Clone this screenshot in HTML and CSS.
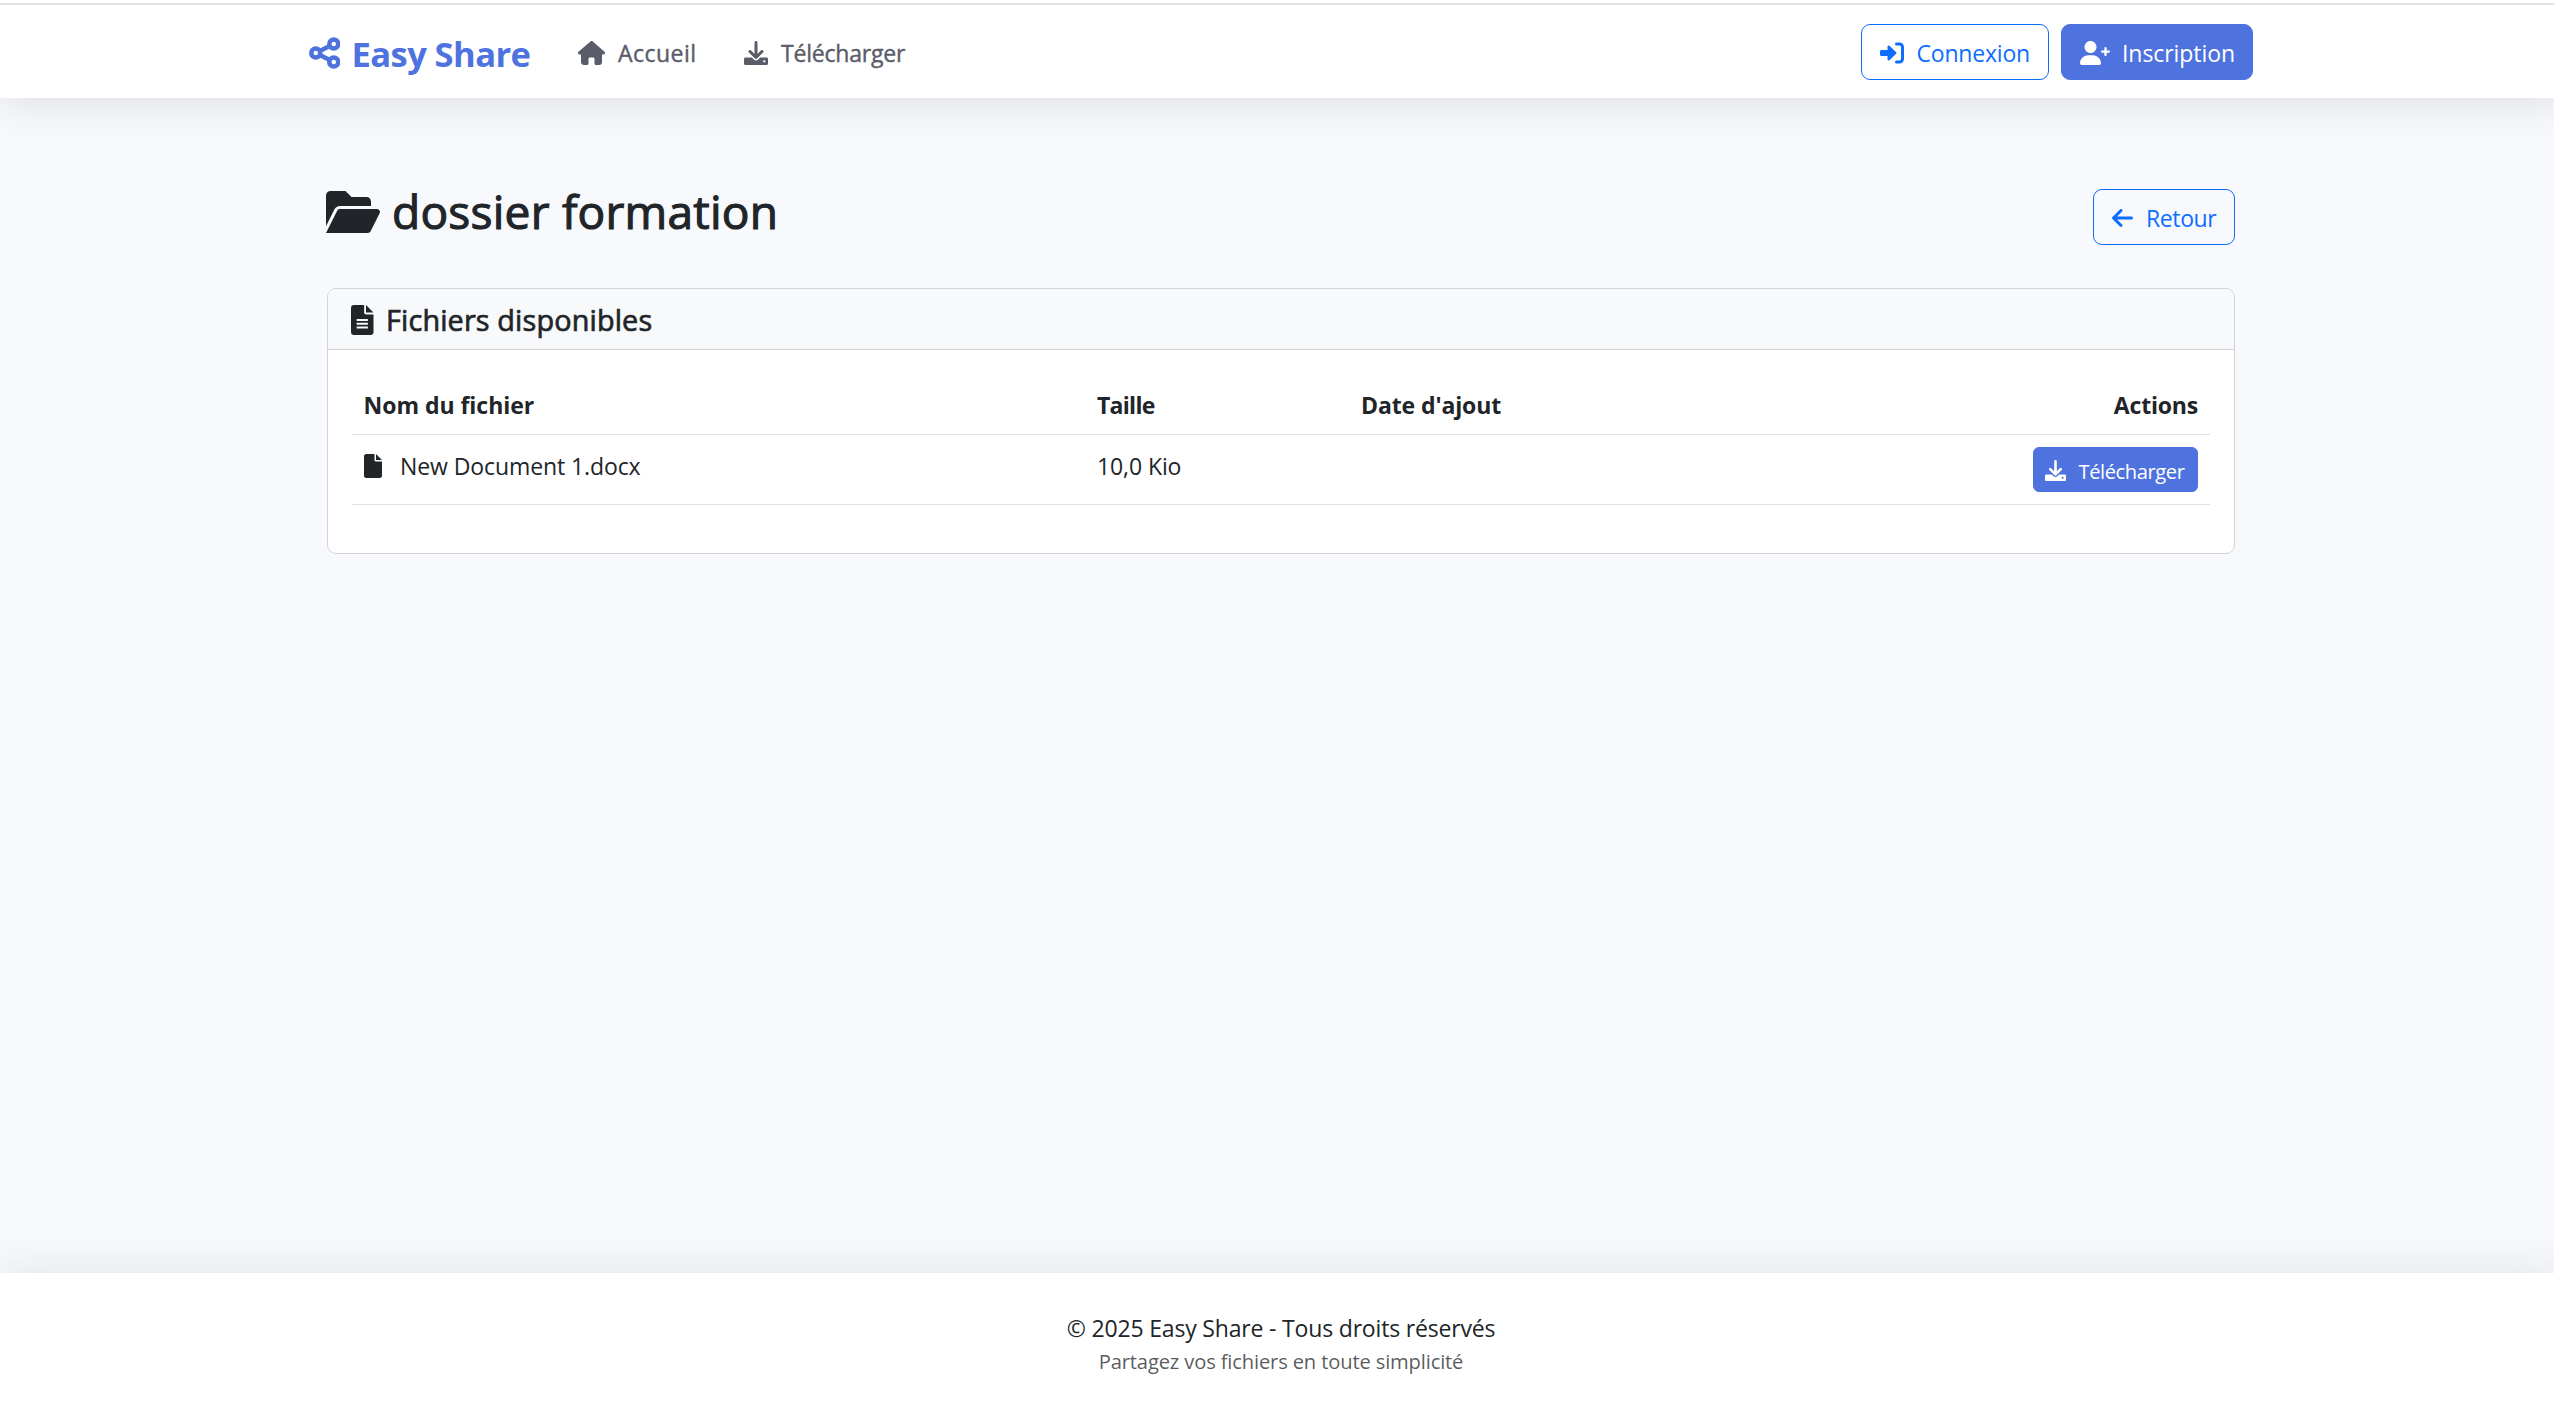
FILE: index.html
```html
<!DOCTYPE html>
<html lang="fr">
<head>
<meta charset="utf-8">
<title>Easy Share</title>
<link rel="stylesheet" href="styles.css">
</head>
<body>
<svg class="sprite" aria-hidden="true">
  <symbol id="i-download" viewBox="0 0 512 512"><path d="M480 352h-133.5l-45.25 45.25C289.2 409.3 273.1 416 256 416s-33.16-6.656-45.25-18.75L165.5 352H32c-17.67 0-32 14.33-32 32v96c0 17.67 14.33 32 32 32h448c17.67 0 32-14.33 32-32v-96C512 366.3 497.7 352 480 352zM432 456c-13.2 0-24-10.8-24-24c0-13.2 10.8-24 24-24s24 10.8 24 24C456 445.2 445.2 456 432 456zM233.4 374.6C239.6 380.9 247.8 384 256 384s16.38-3.125 22.62-9.375l128-128c12.49-12.5 12.49-32.75 0-45.25c-12.5-12.5-32.76-12.5-45.25 0L288 274.8V32c0-17.67-14.33-32-32-32C238.3 0 224 14.33 224 32v242.8L150.6 201.4c-12.49-12.5-32.75-12.5-45.25 0c-12.49 12.5-12.49 32.75 0 45.25L233.4 374.6z"/></symbol>
</svg>
<header class="navbar">
  <div class="container navbar-inner">
    <a class="brand">
      <svg class="icon icon-share" viewBox="0 0 448 512"><g fill="none" stroke="currentColor" stroke-width="64"><circle cx="96" cy="256" r="64"/><circle cx="352" cy="128" r="64"/><circle cx="352" cy="384" r="64"/><path d="M153 227.500 295 156.500M153 284.500 295 355.500"/></g></svg>
      <span class="label brand-name">Easy Share</span>
    </a>
    <nav class="links">
      <a class="link link-home">
        <svg class="icon icon-home" viewBox="0 0 576 512"><path d="M575.8 255.500c0 18-15 32.100-32 32.100h-32l.7 160.200c0 35.300-24 64.200-60 64.200h-68.500c-17.700 0-32-14.300-32-32V384c0-17.700-14.300-32-32-32h-64c-17.700 0-32 14.300-32 32v96c0 17.700-14.300 32-32 32H128c-38 0-64-28.700-64-64V287.600H32c-18 0-32-14-32-32.100 0-9 3-17 10-24L266.400 8c7-7 15-8 22-8s15 2 21 7l255.400 224.500c8 7 12 15 11 24z"/></svg>
        <span class="label home-label">Accueil</span>
      </a>
      <a class="link">
        <svg class="icon icon-md"><use href="#i-download"/></svg>
        <span class="label download-label">Télécharger</span>
      </a>
    </nav>
    <div class="account">
      <a class="btn btn-outline btn-login">
        <svg class="icon icon-md" viewBox="0 0 512 512"><path d="M344.7 238.5l-144.1-136C193.7 95.97 183.4 94.17 174.6 97.95C165.8 101.8 160.1 110.4 160.1 120V192H32.02C14.33 192 0 206.3 0 224v64c0 17.68 14.33 32 32.02 32h128.1v72c0 9.578 5.707 18.25 14.51 22.05c8.803 3.781 19.03 1.984 26-4.594l144.1-136C354.3 264.4 354.3 247.6 344.7 238.5zM416 32h-64c-17.67 0-32 14.33-32 32s14.33 32 32 32h64c17.67 0 32 14.33 32 32v256c0 17.67-14.33 32-32 32h-64c-17.67 0-32 14.33-32 32s14.33 32 32 32h64c53.02 0 96-42.98 96-96V128C512 74.98 469 32 416 32z"/></svg>
        <span class="label">Connexion</span>
      </a>
      <a class="btn btn-primary btn-register">
        <svg class="icon icon-user" viewBox="0 0 640 512"><path d="M224 256c70.7 0 128-57.31 128-128S294.7 0 224 0C153.3 0 96 57.31 96 128S153.3 256 224 256zM274.7 304H173.3C77.61 304 0 381.6 0 477.3C0 496.5 15.52 512 34.66 512h378.7C432.5 512 448 496.5 448 477.3C448 381.6 370.4 304 274.7 304zM616 200h-48v-48C568 138.8 557.3 128 544 128s-24 10.75-24 24v48h-48C458.8 200 448 210.8 448 224s10.75 24 24 24h48v48C520 309.3 530.8 320 544 320s24-10.75 24-24v-48h48C629.3 248 640 237.3 640 224S629.3 200 616 200z"/></svg>
        <span class="label">Inscription</span>
      </a>
    </div>
  </div>
</header>
<main class="container main">
  <div class="heading">
    <h1 class="title">
      <svg class="icon icon-folder" viewBox="0 0 576 512"><path d="M147.8 192H480V144C480 117.5 458.5 96 432 96h-160l-64-64h-160C21.49 32 0 53.49 0 80v328.4l90.54-181.1C101.4 205.6 123.4 192 147.8 192zM543.1 224H147.8C135.7 224 124.6 230.8 119.2 241.7L0 480h447.1c12.12 0 23.2-6.852 28.62-17.69l96-192C583.2 249 567.7 224 543.1 224z"/></svg>
      <span>dossier formation</span>
    </h1>
    <a class="btn btn-outline btn-back">
      <svg class="icon icon-arrow" viewBox="0 0 448 512"><path d="M447.1 256C447.1 273.7 432.8 288 415.1 288H109.3l105.4 105.4c12.5 12.5 12.5 32.75 0 45.25C208.4 444.9 200.2 448 192 448s-16.38-3.125-22.62-9.375l-160-160c-12.5-12.5-12.5-32.75 0-45.25l160-160c12.5-12.5 32.75-12.5 45.25 0s12.5 32.75 0 45.25L109.3 224H415.1C432.8 224 447.1 238.3 447.1 256z"/></svg>
      <span class="label">Retour</span>
    </a>
  </div>
  <section class="card">
    <h2 class="card-header">
      <svg class="icon icon-doc" viewBox="0 0 384 512"><path fill-rule="evenodd" d="M0 48C0 21.490 21.490 0 48 0H224V128c0 17.700 14.300 32 32 32H384V464c0 26.500-21.500 48-48 48H48c-26.510 0-48-21.500-48-48zM256 0V128H384zM96 240V272H288V240zM96 304V336H288V304zM96 368V400H288V368z"/></svg>
      <span class="label">Fichiers disponibles</span>
    </h2>
    <div class="card-body">
      <table class="files">
        <colgroup><col class="col-name"><col class="col-size"><col class="col-date"><col></colgroup>
        <thead>
          <tr><th>Nom du fichier</th><th class="th-size">Taille</th><th class="th-date">Date d'ajout</th><th class="th-actions">Actions</th></tr>
        </thead>
        <tbody>
          <tr>
            <td><div class="file"><svg class="icon icon-file" viewBox="0 0 384 512"><path d="M0 48C0 21.490 21.490 0 48 0H224V128c0 17.700 14.300 32 32 32H384V464c0 26.500-21.500 48-48 48H48c-26.510 0-48-21.500-48-48zM256 0V128H384z"/></svg><span>New Document 1.docx</span></div></td>
            <td>10,0 Kio</td>
            <td></td>
            <td class="td-actions">
              <a class="btn btn-primary btn-small">
                <svg class="icon icon-sm"><use href="#i-download"/></svg>
                <span class="label">Télécharger</span>
              </a>
            </td>
          </tr>
        </tbody>
      </table>
    </div>
  </section>
</main>
<footer class="footer">
  <p class="copyright">© 2025 Easy Share - Tous droits réservés</p>
  <p class="tagline">Partagez vos fichiers en toute simplicité</p>
</footer>
</body>
</html>
```
FILE: styles.css
```css
* { box-sizing: border-box; }
html { overflow: hidden; background: #f8f9fc; }
body {
  margin: 0;
  width: 2562px;
  height: 1410px;
  display: flex;
  flex-direction: column;
  background: #f8f9fd;
  color: #212529;
  font-family: "Open Sans", "Noto Sans", sans-serif;
  font-size: 23.04px;
  line-height: 36px;
  letter-spacing: -0.11px;
}
h1, h2, p { margin: 0; font-weight: 500; }
.sprite { display: none; }
.container { width: 1944px; margin: 0 auto; }

.icon { display: block; flex: none; height: 24px; fill: currentColor; margin-top: 2px; }
.icon-md { width: 24px; }
.icon-sm { width: 21px; height: 21px; margin-top: 1px; }
.icon-share { width: 31.5px; height: 36px; }
.icon-home { width: 27px; }
.icon-user { width: 30px; }
.icon-arrow { width: 21px; }
.icon-folder { width: 54px; height: 48px; margin: 0 0 0 -1px; }
.icon-doc { width: 22.5px; height: 30px; }
.icon-file { width: 18px; margin: 0; }
.label { margin-top: 2px; white-space: nowrap; }

.navbar {
  flex: none;
  height: 98px;
  padding-top: 3px;
  background: #fff;
  box-shadow: 0 3.6px 42px rgba(58, 59, 69, .15);
}
.navbar::before { content: ""; display: block; height: 2px; background: #e1e2e8; }
.navbar-inner { display: flex; align-items: center; padding-top: 19px; }
.brand {
  width: 269.5px;
  display: flex;
  align-items: center;
  gap: 11.5px;
  color: #4e73df;
  font-size: 34.56px;
  font-weight: 700;
  letter-spacing: -.58px;
}
.brand .icon { margin-left: -.5px; }
.brand-name { margin-top: 4px; }
.links { display: flex; color: #5a5c69; font-weight: 500; -webkit-text-stroke: .4px currentColor; }
.link { display: flex; align-items: center; gap: 13px; }
.link .icon { margin-left: -.5px; }
.link-home { width: 166px; gap: 13px; }
.home-label { letter-spacing: .45px; }
.download-label { letter-spacing: -.22px; }
.account { display: flex; gap: 12px; margin-left: auto; }

.btn {
  display: flex;
  align-items: center;
  gap: 12.5px;
  height: 56px;
  padding-left: 18px;
  border: 1px solid transparent;
  border-radius: 9px;
}
.btn-outline { color: #0d6efd; border-color: #0d6efd; }
.btn-primary { color: #fff; background: #4e73df; border-color: #4e73df; }
.btn-login { width: 188px; letter-spacing: -.21px; }
.btn-register { width: 192px; gap: 12px; letter-spacing: -.08px; }
.btn-back { width: 142px; gap: 13px; letter-spacing: -.41px; }
.btn-small {
  width: 165px;
  height: 45px;
  padding-left: 11px;
  margin-left: auto;
  border-radius: 6px;
  font-size: 20.16px;
  letter-spacing: -.43px;
}

.main { flex: 1; padding: 91px 18px 0; }
.heading { display: flex; justify-content: space-between; align-items: flex-start; height: 99px; }
.title {
  display: flex;
  align-items: center;
  gap: 12px;
  height: 46px;
  font-size: 46.08px;
  letter-spacing: .22px;
  -webkit-text-stroke: 1.1px currentColor;
}
.card { height: 266px; background: #fff; border: 1px solid #d1d3d4; border-radius: 9px; overflow: hidden; }
.card-header {
  display: flex;
  align-items: center;
  gap: 12.5px;
  height: 61px;
  padding-left: 23px;
  background: #f8f9fb;
  border-bottom: 1px solid #d1d3d4;
  font-size: 28.8px;
  letter-spacing: .15px;
  -webkit-text-stroke: .7px currentColor;
}
.card-body { padding: 24px; }

.files { width: 100%; table-layout: fixed; border-collapse: separate; border-spacing: 0; }
.col-name { width: 733px; }
.col-size { width: 264px; }
.files th {
  height: 61px;
  padding: 1px 12px 0 11.5px;
  border-bottom: 1px solid #dee2e6;
  text-align: left;
  font-weight: 700;
  letter-spacing: -.04px;
}
.files .th-size { padding-left: 12px; letter-spacing: -.73px; }
.files .th-date { letter-spacing: -.12px; padding-left: 12px; }
.files .th-actions { text-align: right; letter-spacing: -.2px; }
.files td { height: 70px; padding: 13px 12px 0; border-bottom: 1px solid #dee2e6; vertical-align: top; }
.files .td-actions { padding-top: 12px; }
.col-date { width: 430px; }
.file { display: flex; align-items: center; gap: 18.5px; margin-left: -.5px; }

.footer {
  flex: none;
  height: 137px;
  padding-top: 37px;
  background: #fff;
  box-shadow: 0 -3.6px 42px rgba(58, 59, 69, .1);
  text-align: center;
}
.copyright { font-weight: 400; letter-spacing: -.19px; }
.tagline { font-size: 20.16px; font-weight: 400; line-height: 31px; letter-spacing: -.15px; color: rgba(33, 37, 41, .75); }

.icon path { stroke-width: 0; }
.icon g path { stroke-width: 64; }
```
